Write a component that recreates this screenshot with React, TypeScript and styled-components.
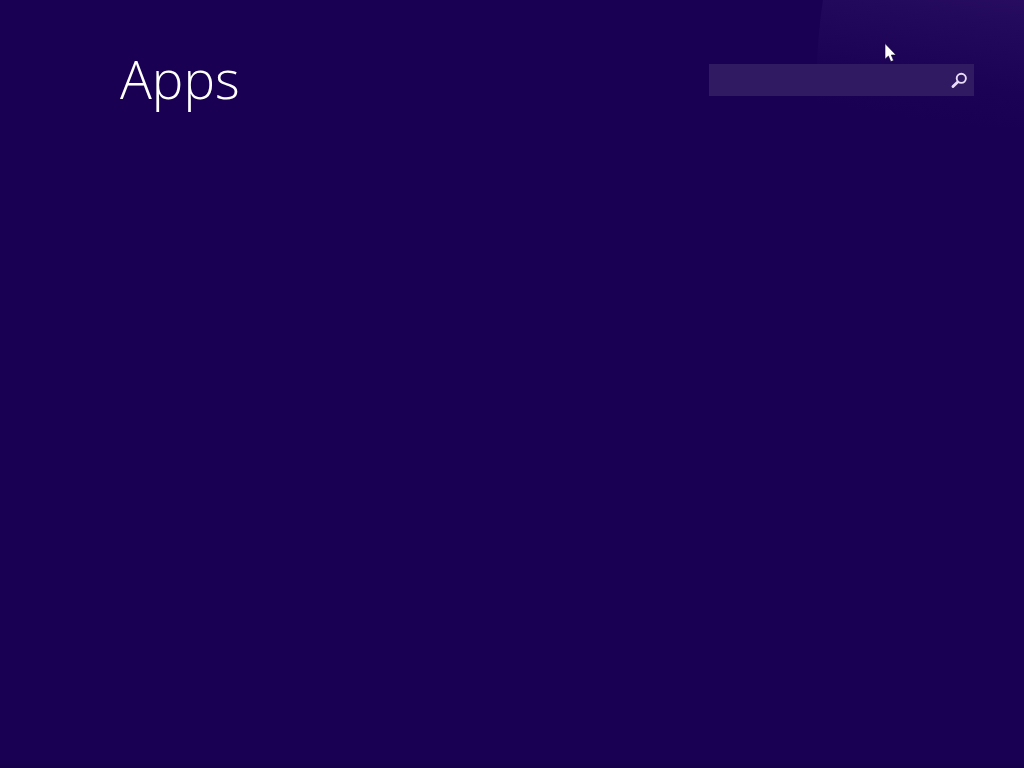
import React, { useState } from "react";
import styled, { createGlobalStyle } from "styled-components";

const GlobalStyle = createGlobalStyle`
  *, *::before, *::after { box-sizing: border-box; }
  html { background: #190052; }
  body { margin: 0; }
`;

const Screen = styled.main`
  position: relative;
  min-height: 100vh;
  overflow: hidden;
  color: #fff;
  background: linear-gradient(to bottom, #190052 0, #190052 calc(100% - 8px), #15004a 100%);
  font-family: "Open Sans", "Noto Sans", sans-serif;
`;

/* Faint curved sheen in the top right corner of the wallpaper. */
const Sheen = styled.svg`
  position: absolute;
  top: 0;
  right: 0;
  width: 208px;
  height: 128px;
  pointer-events: none;
`;

const Header = styled.header`
  position: relative;
  display: flex;
  align-items: center;
  justify-content: space-between;
  gap: 24px;
  padding: 39px 50px 0 120px;
`;

const Title = styled.h1`
  margin: 0;
  padding-bottom: 2px;
  font-size: 53px;
  font-weight: 300;
  line-height: 80px;
`;

const SearchForm = styled.form`
  display: flex;
  width: 265px;
  height: 32px;
  background: #301b63;
`;

const SearchInput = styled.input`
  flex: 1;
  min-width: 0;
  padding: 0 8px;
  border: 0;
  outline: 0;
  background: transparent;
  color: #fff;
  font: inherit;
  font-size: 15px;
`;

const SearchButton = styled.button`
  display: flex;
  align-items: center;
  justify-content: center;
  width: 30px;
  padding: 0;
  border: 0;
  background: transparent;
  color: #eadcfb;
`;

const Pointer = styled.svg`
  position: absolute;
  top: 43px;
  left: 884px;
  width: 13px;
  height: 20px;
  pointer-events: none;
`;

export default function App() {
  const [query, setQuery] = useState("");

  return (
    <>
      <GlobalStyle />
      <Screen>
        <Sheen viewBox="0 0 208 128" aria-hidden="true">
          <defs>
            <linearGradient id="sheen" x1="1" y1="0" x2="0.75" y2="1">
              <stop offset="0" stopColor="#270c5f" />
              <stop offset="0.35" stopColor="#200759" />
              <stop offset="0.7" stopColor="#1b0255" />
              <stop offset="1" stopColor="#190052" />
            </linearGradient>
          </defs>
          <path d="M7 0C4 20 2 40 1 64L0 128H208V0Z" fill="url(#sheen)" />
        </Sheen>
        <Header>
          <Title>Apps</Title>
          <SearchForm role="search" onSubmit={(e) => e.preventDefault()}>
            <SearchInput
              type="text"
              aria-label="Search apps"
              value={query}
              onChange={(e) => setQuery(e.target.value)}
            />
            <SearchButton type="submit" aria-label="Search">
              <svg width="16" height="16" viewBox="0 0 16 16" fill="none" stroke="currentColor" aria-hidden="true">
                <circle cx="10.3" cy="6.3" r="4.6" strokeWidth="1.9" />
                <path d="M6.7 9.9L2 14.6" strokeWidth="2.8" strokeLinecap="round" />
              </svg>
            </SearchButton>
          </SearchForm>
        </Header>
        <Pointer viewBox="0 0 13 20" aria-hidden="true">
          <path
            d="M1 0.5V16.2L4.4 13L6.8 18.6L9.6 17.6L7.3 12H12Z"
            fill="#fff"
            stroke="#0b0030"
            strokeWidth="0.6"
          />
        </Pointer>
      </Screen>
    </>
  );
}
